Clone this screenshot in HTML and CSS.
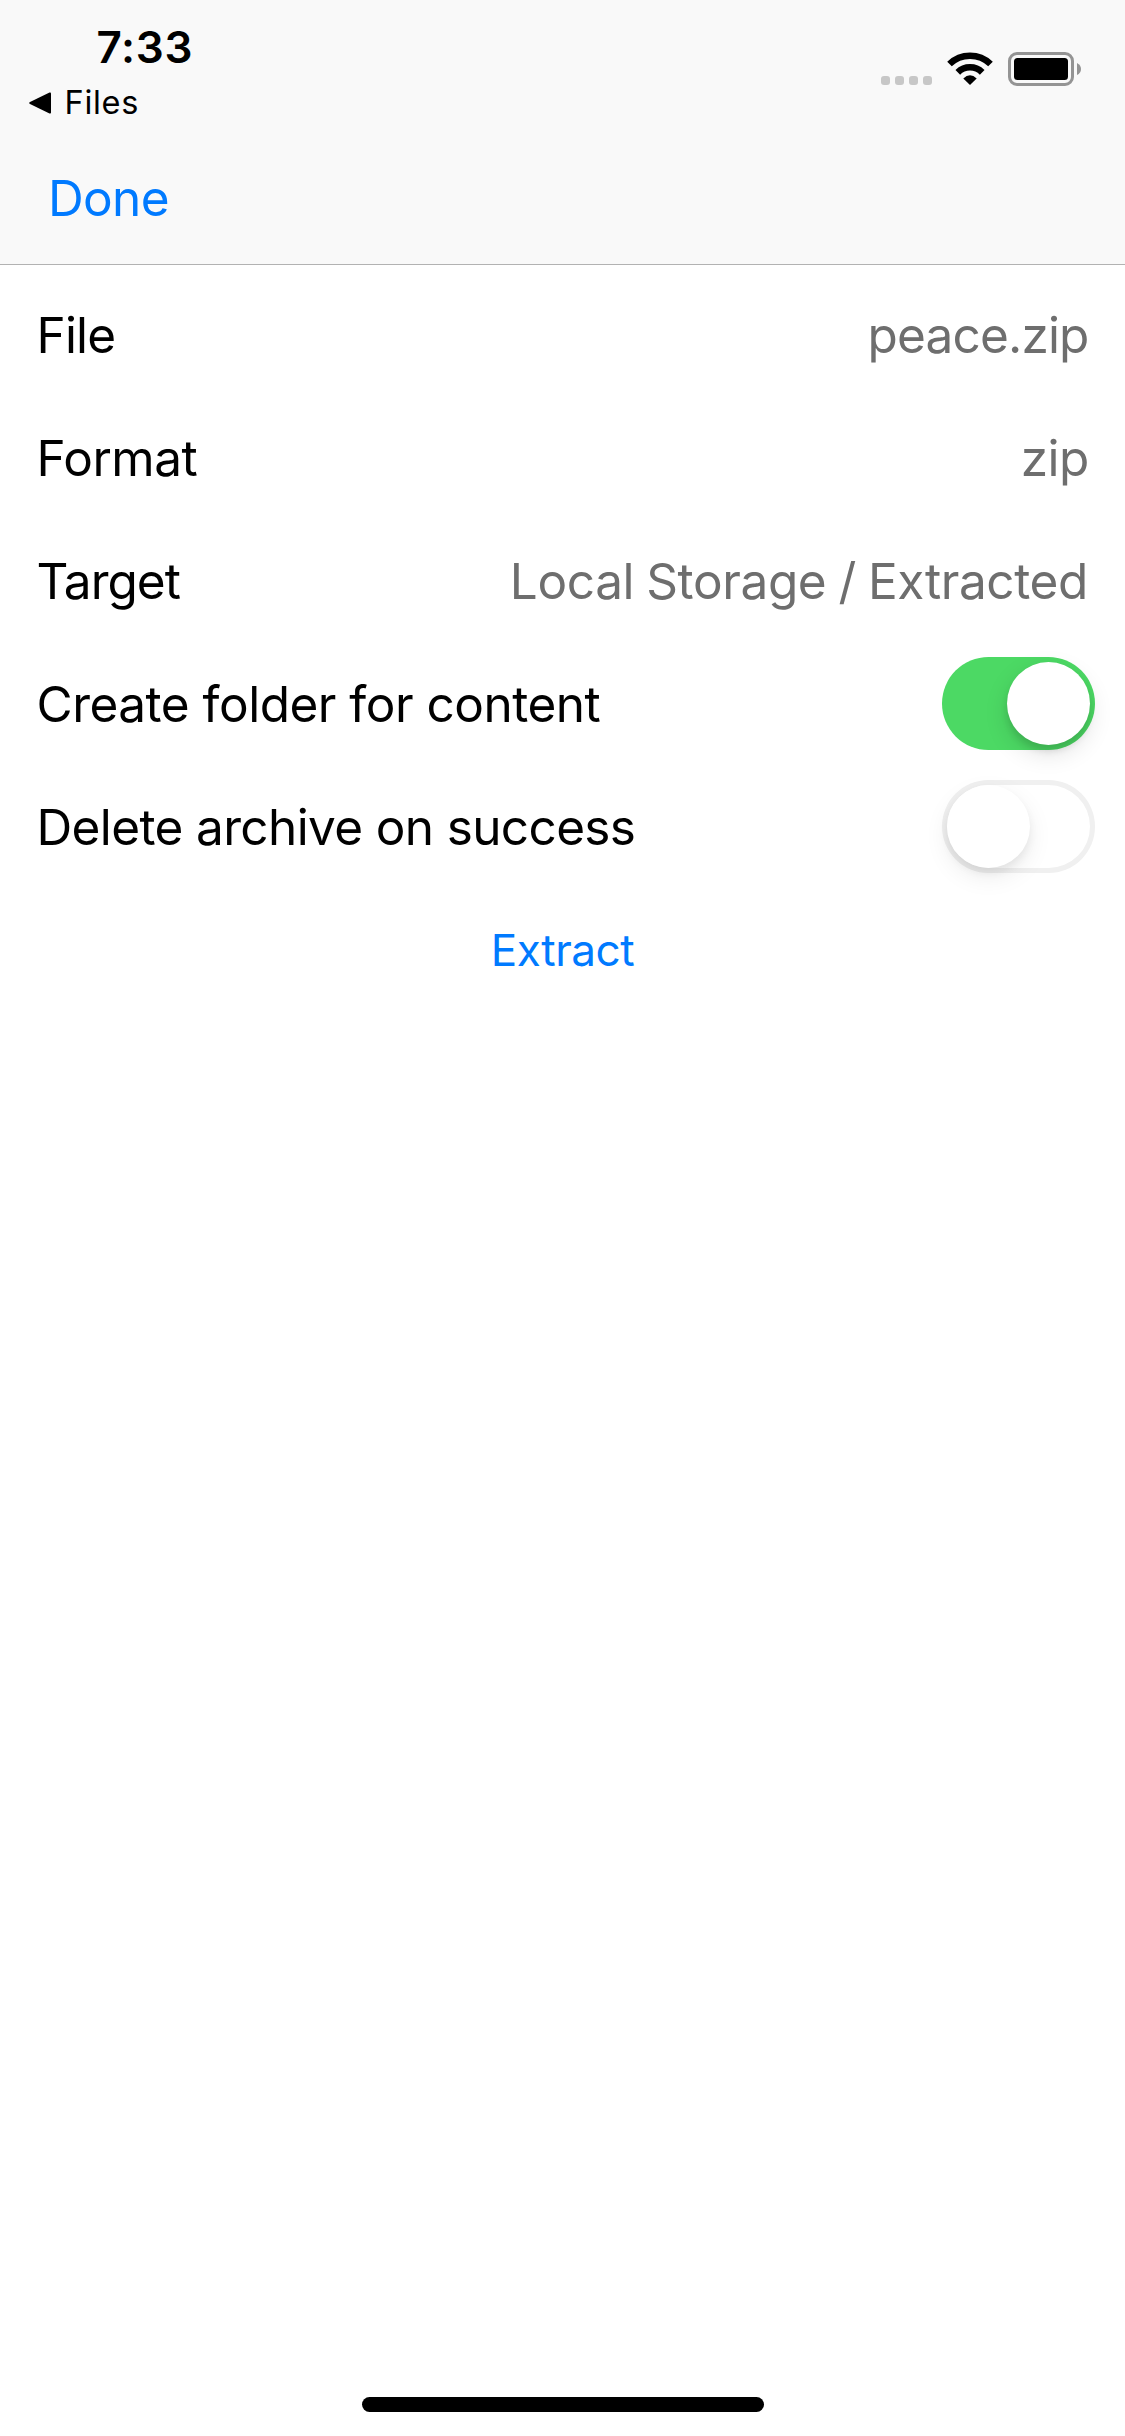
FILE: index.html
```html
<!DOCTYPE html>
<html lang="en">
<head>
<meta charset="utf-8">
<title>Extract archive</title>
<link rel="stylesheet" href="styles.css">
</head>
<body>
<div class="screen">
  <header class="header">
    <div class="status">
      <div class="status-left">
        <div class="time">7:33</div>
        <div class="back">
          <svg class="back-arrow" viewBox="0 0 22 22" width="22" height="22"><path d="M20.5 0.6 Q22 0 22 1.6 V20.4 Q22 22 20.5 21.4 L1 12 Q-0.6 11 1 10 Z"/></svg>
          <span class="back-label">Files</span>
        </div>
      </div>
      <svg class="status-icons" viewBox="0 0 202 34" width="202" height="34">
        <g fill="#c7c7c7">
          <rect x="0" y="24" width="9" height="9" rx="3"/>
          <rect x="14" y="24" width="9" height="9" rx="3"/>
          <rect x="28" y="24" width="9" height="9" rx="3"/>
          <rect x="42" y="24" width="9" height="9" rx="3"/>
        </g>
        <g fill="none" stroke="#000" stroke-width="6.6">
          <path d="M68.5 12 A29.5 29.5 0 0 1 109.5 12"/>
          <path d="M76.8 20.3 A17.3 17.3 0 0 1 101.2 20.3"/>
        </g>
        <path d="M82.3 26.4 Q89 20.2 95.7 26.4 L89 33 Z"/>
        <rect x="128.5" y="1.5" width="63" height="31" rx="7.5" fill="none" stroke="#949494" stroke-width="3"/>
        <rect x="133" y="6" width="54" height="22" rx="3.5"/>
        <path d="M196 11 Q200 13 200 17 Q200 21 196 23 Z" fill="#949494"/>
      </svg>
    </div>
    <nav class="nav"><a class="done">Done</a></nav>
  </header>
  <main class="list">
    <div class="row"><span class="label snug">File</span><span class="value snug">peace.zip</span></div>
    <div class="row"><span class="label loose">Format</span><span class="value">zip</span></div>
    <div class="row"><span class="label tight">Target</span><span class="value path">Local Storage / Extracted</span></div>
    <div class="row"><span class="label loose">Create folder for content</span><span class="switch on"><i class="knob"></i></span></div>
    <div class="row"><span class="label">Delete archive on success</span><span class="switch"><i class="knob"></i></span></div>
    <div class="row center"><a class="extract">Extract</a></div>
  </main>
  <div class="home"></div>
</div>
</body>
</html>
```
FILE: styles.css
```css
* { box-sizing: border-box; }
body { margin: 0; background: #fff; font-family: Inter, "Liberation Sans", sans-serif; color: #000; }
.screen { width: 1125px; height: 2436px; display: flex; flex-direction: column; overflow: hidden; }
.header { height: 265px; background: #f9f9f9; border-bottom: 1px solid #b2b2b2; }
.status { height: 132px; display: flex; justify-content: space-between; padding: 21px 42px 0 29px; }
.time { height: 52px; line-height: 52px; font-size: 44px; font-weight: 600; letter-spacing: 0.7px; padding-left: 67.5px; }
.back { height: 60px; display: flex; align-items: center; gap: 13.5px; }
.back-label { font-size: 32.5px; line-height: 60px; letter-spacing: 0.7px; }
.status-icons { margin-top: 31px; }
.nav { height: 132px; padding-left: 48px; line-height: 132px; }
.done { font-size: 49.5px; letter-spacing: -0.65px; color: #007aff; }
.list { padding-top: 8px; }
.row { height: 123px; display: flex; align-items: center; justify-content: space-between; padding: 0 30px 0 36.5px; font-size: 49.5px; letter-spacing: -0.63px; white-space: nowrap; }
.row.center { justify-content: center; padding: 0; }
.value { margin-right: 6.4px; color: #6e6e6e; }
.path { letter-spacing: -0.38px; word-spacing: -1.5px; margin-right: 7px; }
.loose { letter-spacing: -0.5px; }
.snug { letter-spacing: -0.82px; }
.tight { letter-spacing: -0.98px; }
.extract { font-size: 44px; letter-spacing: -0.4px; color: #007aff; }
.switch { width: 153px; height: 93px; border-radius: 47px; padding: 5px; display: flex; box-shadow: inset 0 0 0 5px #f0f0f0; }
.switch.on { background: #4cd964; justify-content: flex-end; box-shadow: none; }
.knob { width: 83px; height: 83px; border-radius: 50%; background: #fff; box-shadow: 0 9px 24px rgba(0, 0, 0, .08), 0 5px 9px rgba(0, 0, 0, .06); }
.switch.on .knob { box-shadow: 0 9px 24px rgba(0, 0, 0, .12), 0 6px 7px rgba(0, 0, 0, .11); }
.home { width: 402px; height: 15px; border-radius: 8px; background: #000; margin: auto auto 24px; }
```
